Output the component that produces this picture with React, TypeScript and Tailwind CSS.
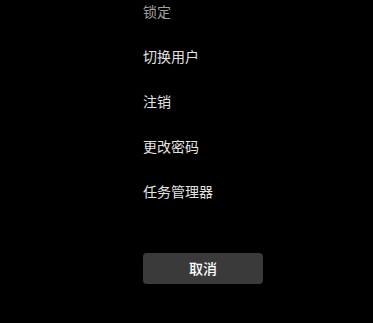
export default function App() {
  const items = ["切换用户", "注销", "更改密码", "任务管理器"];
  return (
    <div
      className="w-[373px] h-[323px] bg-black overflow-hidden"
      style={{ fontFamily: '"Noto Sans CJK SC", "Noto Sans", sans-serif' }}
    >
      <div className="flex flex-col pl-[143px] pt-[1px]">
        <div className="flex flex-col gap-[25px]">
          <span className="text-[14px] leading-[20px] text-[#a0a0a0]">锁定</span>
          {items.map((t) => (
            <span key={t} className="text-[14px] leading-[20px] text-[#e2e2e2]">
              {t}
            </span>
          ))}
        </div>
        <button className="mt-[52px] w-[120px] h-[31px] rounded-[4px] bg-[#3a3a3a] text-[14px] text-white font-medium flex items-center justify-center">
          取消
        </button>
      </div>
    </div>
  );
}
